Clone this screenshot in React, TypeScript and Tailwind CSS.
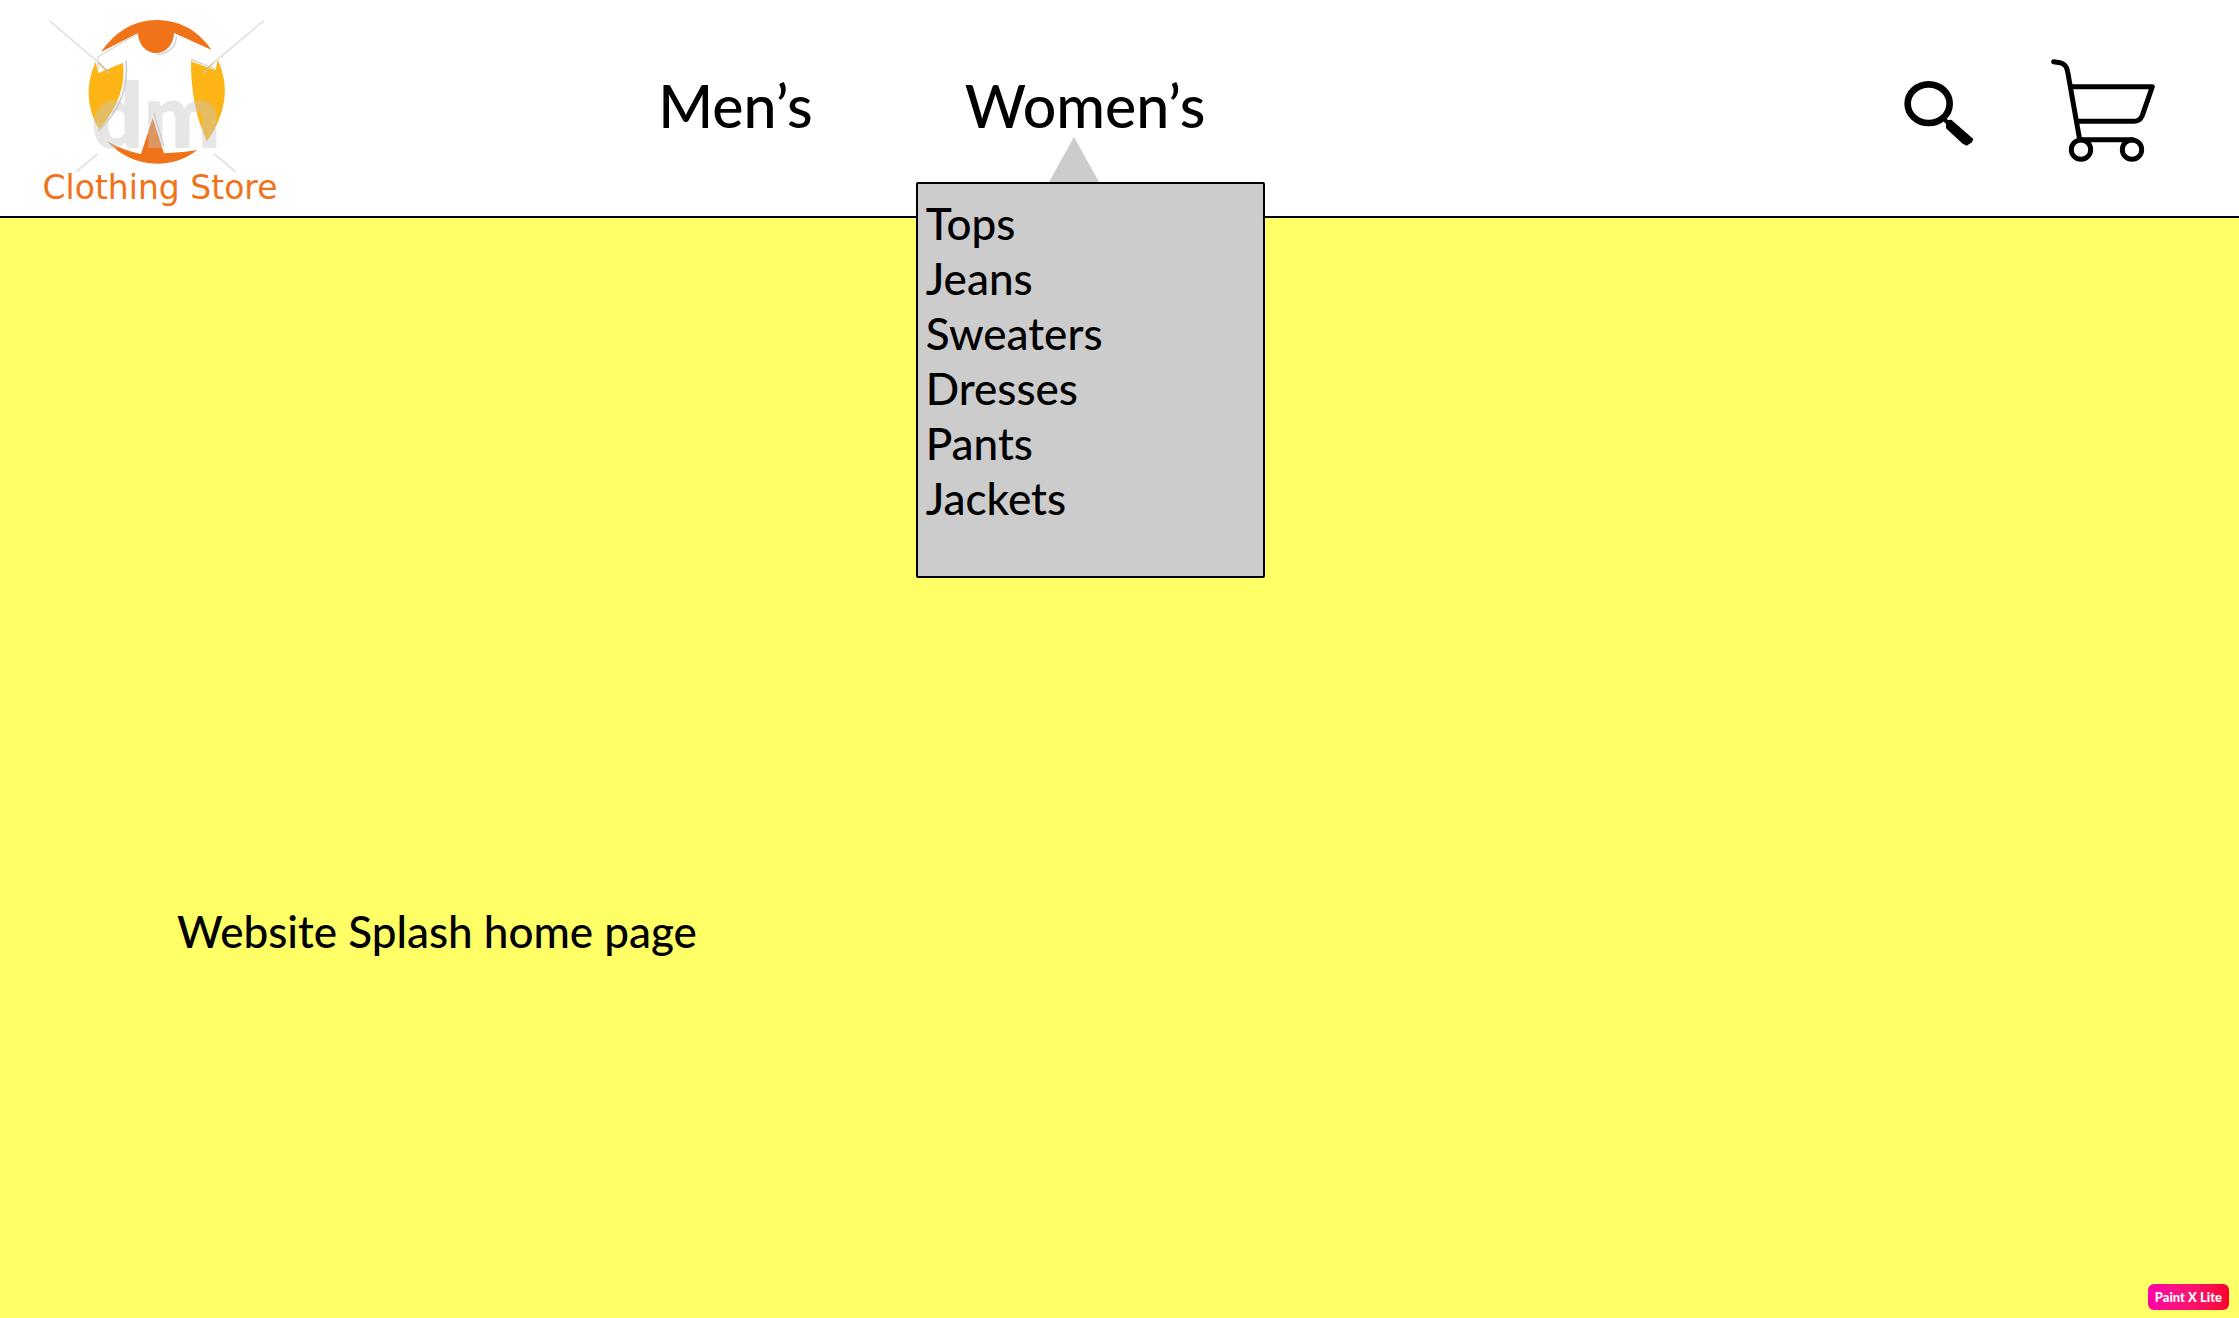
const womensCategories = ['Tops', 'Jeans', 'Sweaters', 'Dresses', 'Pants', 'Jackets'];

function LogoMark() {
  return (
    <svg viewBox="0 0 840 516" className="block w-full" aria-hidden="true">
      <path d="M243 156Q310 60 411 60Q512 60 575 150L462 99A54 60 0 0 1 354 99Z" fill="#f07319" />
      <path d="M227 185L235 219L309 188Q322 290 237 388Q180 290 227 185Z" fill="#fdb515" />
      <path d="M593 178L587 211L513 184Q512 320 561 424Q603 366 613 300Q621 240 593 178Z" fill="#fdb515" />
      <path d="M261 424Q310 452 363 462L398 355L432 460Q485 459 532 450Q480 491 411 491Q325 491 261 424Z" fill="#f07319" />
      <g fill="none" stroke="#cfcfcf" strokeWidth="5">
        <path d="M318 182Q330 305 235 392" />
        <path d="M469 109Q468 158 408 164" strokeWidth="4" />
        <path d="M354 101L234 170V212" strokeWidth="3" />
        <path d="M513 178L587 207" strokeWidth="4" />
        <path d="M401 338L432 440" strokeWidth="4" />
      </g>
      <text x="214" y="443" className="font-['Lato'] font-extrabold" fill="#c6c6c6" opacity="0.42" fontSize="272">
        dm
      </text>
      <g stroke="#e2e2e2" strokeWidth="5">
        <path d="M87 61L235 187M732 61L580 189" />
        <path d="M235 187L268 220M580 189L548 220" stroke="#d3c28c" />
        <path d="M232 462L168 516M583 462L647 516" />
      </g>
    </svg>
  );
}

function SearchIcon() {
  return (
    <svg viewBox="0 0 210 198" className="block w-[70px]" aria-hidden="true">
      <ellipse cx="74" cy="68" rx="63" ry="58" fill="none" stroke="#000" strokeWidth="20" />
      <path d="M120 114L132 126" stroke="#000" strokeWidth="12" />
      <path d="M126 118L142 116L208 174L204 184L188 194L176 188L126 142Z" fill="#000" />
    </svg>
  );
}

function CartIcon() {
  return (
    <svg viewBox="0 0 312 310" className="block w-[104px]" aria-hidden="true">
      <g fill="none" stroke="#000" strokeWidth="15" strokeLinecap="round" strokeLinejoin="round">
        <path d="M8 8L27 11Q47 16 50 38L86 242" />
        <path d="M64 83H304L274 169Q267 187 248 187H82" />
        <path d="M90 242H244" />
        <circle cx="90" cy="272" r="29" />
        <circle cx="243" cy="272" r="29" />
      </g>
    </svg>
  );
}

export default function App() {
  return (
    <div className="flex min-h-screen flex-col bg-[#ffff66] font-['Lato',sans-serif] font-medium text-black">
      <header className="flex h-[218px] items-start border-b-2 border-black bg-white">
        <a href="#home" className="ml-5 block w-[280px] shrink-0">
          <LogoMark />
          <span className="block text-center font-['DejaVu_Sans',sans-serif] text-[33px] leading-8 font-normal whitespace-nowrap text-[#f07319]">
            Clothing Store
          </span>
        </a>
        <nav className="ml-[16%] flex items-start gap-[152px] pt-16 text-[59px] leading-[84px]">
          <a href="#mens">Men’s</a>
          <div className="relative">
            <a href="#womens" aria-expanded="true">
              Women’s
            </a>
            <div className="absolute top-[118px] -left-[49px] z-10 w-[349px] rounded-xs border-2 border-black bg-[#cccccc] pt-3 pb-[50px] pl-2 text-[44px] leading-[55px]">
              <svg viewBox="0 0 50 45" className="absolute bottom-full left-[131px] mb-0.5 w-[50px]" aria-hidden="true">
                <path d="M25 0L50 45H0Z" fill="#cccccc" />
              </svg>
              <ul>
                {womensCategories.map((name) => (
                  <li key={name}>
                    <a href="#womens">{name}</a>
                  </li>
                ))}
              </ul>
            </div>
          </div>
        </nav>
        <div className="mr-[84px] ml-auto flex items-start gap-[77px] pt-[59px]">
          <button type="button" aria-label="Search" className="mt-[22px]">
            <SearchIcon />
          </button>
          <button type="button" aria-label="Cart">
            <CartIcon />
          </button>
        </div>
      </header>
      <main className="flex-1 pt-[686px] pl-[177px]">
        <h1 className="text-[44px] leading-[55px]">Website Splash home page</h1>
      </main>
      <footer className="flex justify-end pr-2.5 pb-2">
        <span className="rounded-md bg-linear-to-r from-[#ff00a8] to-[#fa0028] px-[7px] text-[13px] leading-[26px] font-black text-white">
          Paint X Lite
        </span>
      </footer>
    </div>
  );
}
